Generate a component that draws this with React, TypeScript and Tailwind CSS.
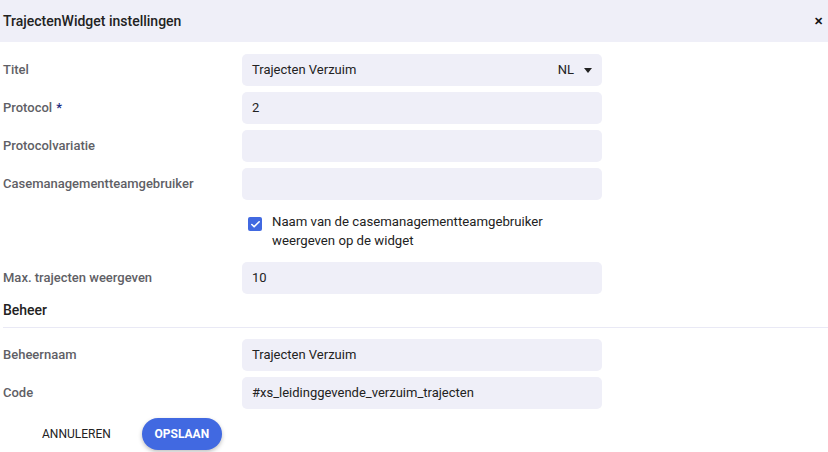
import { Check } from 'lucide-react'

const labelCls = 'w-[239px] shrink-0 text-[13px] font-medium text-[#5f5f66]'
const inputCls = 'w-[360px] h-8 rounded-[5px] bg-[#efeff8] pl-[10px] flex items-center text-[13px] text-[#222]'

function Row({ label, value, required }: { label: string; value?: string; required?: boolean }) {
  return (
    <div className="flex items-center">
      <div className={labelCls}>
        {label}
        {required && <span className="text-[#1a2a80] ml-1">*</span>}
      </div>
      <div className={inputCls}>{value}</div>
    </div>
  )
}

export default function App() {
  return (
    <div className="w-[828px] h-[452px] bg-white overflow-hidden" style={{ fontFamily: 'Roboto, "Liberation Sans", sans-serif' }}>
      {/* Header */}
      <div className="h-[42px] bg-[#efeff8] flex items-center justify-between pl-[3px] pr-[5px]">
        <h1 className="text-[14px] font-medium text-[#222]">TrajectenWidget instellingen</h1>
        <span className="text-[11px] font-bold text-[#111] leading-none">✕</span>
      </div>

      <div className="pl-[3px] pt-3">
        <div className="flex flex-col gap-[6px]">
          <div className="flex items-center">
            <div className={labelCls}>Titel</div>
            <div className={inputCls + ' justify-between pr-[10px]'}>
              <span>Trajecten Verzuim</span>
              <span className="flex items-center gap-[10px]">
                NL
                <svg width="8" height="5" viewBox="0 0 8 5"><path d="M0 0h8L4 5z" fill="#222" /></svg>
              </span>
            </div>
          </div>
          <Row label="Protocol" value="2" required />
          <Row label="Protocolvariatie" />
          <Row label="Casemanagementteamgebruiker" />
        </div>

        {/* Checkbox */}
        <div className="flex items-start mt-[10px] mb-3 pl-[245px]">
          <div className="w-[14px] h-[14px] mt-[7px] rounded-[2px] bg-[#4169e1] flex items-center justify-center">
            <Check size={11} strokeWidth={3.5} color="white" />
          </div>
          <div className="ml-[10px] text-[13.2px] leading-[19px] text-[#222] pt-[2px]">
            Naam van de casemanagementteamgebruiker
            <br />
            weergeven op de widget
          </div>
        </div>

        <Row label="Max. trajecten weergeven" value="10" />

        {/* Beheer */}
        <div className="mt-[7px] pb-[8px] border-b border-[#e9e9f5]">
          <h2 className="text-[14px] font-medium text-[#222] leading-[18px]">Beheer</h2>
        </div>

        <div className="flex flex-col gap-[6px] mt-[11px]">
          <Row label="Beheernaam" value="Trajecten Verzuim" />
          <Row label="Code" value="#xs_leidinggevende_verzuim_trajecten" />
        </div>

        <div className="flex items-center mt-[9px] pl-[39px]">
          <button className="text-[12px] font-normal text-[#222] uppercase">Annuleren</button>
          <button className="ml-[31px] w-20 h-8 rounded-full bg-[#4169e1] text-white text-[12px] font-bold uppercase shadow-[0_2px_4px_rgba(0,0,0,0.25)]">
            Opslaan
          </button>
        </div>
      </div>
    </div>
  )
}
